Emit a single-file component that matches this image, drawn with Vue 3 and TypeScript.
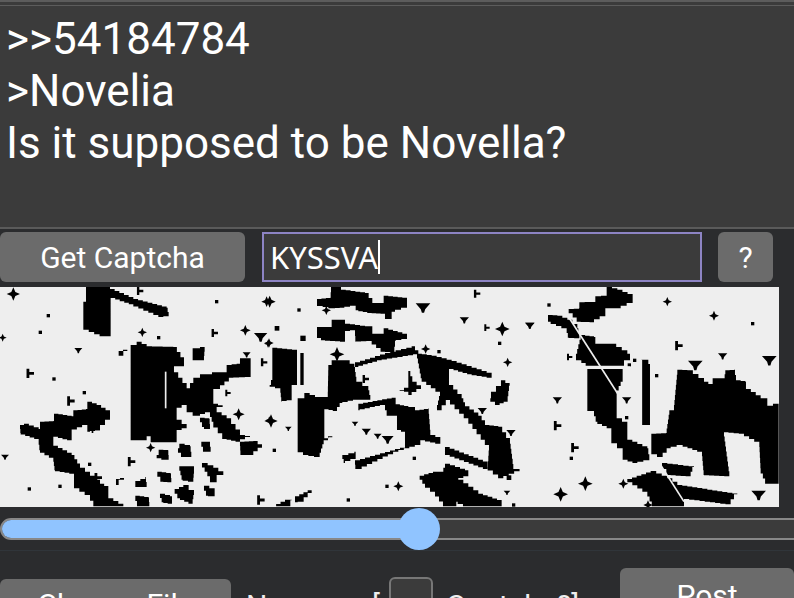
<script setup lang="ts">
// captcha shapes, in coordinates of 3x crops (left / middle / right part)
type Mark = [number, number, number, 'd' | 't' | 'f' | 'o']
type Part = { x: number; shapes: string[]; marks: Mark[]; lines?: string[] }

// the captcha is blocky, so slanted edges become stairs
function stairs(points: string, step = 15): string {
  const p = points.split(' ').map((s) => s.split(',').map(Number))
  const out: string[] = []
  p.forEach((a, i) => {
    const b = p[(i + 1) % p.length]
    const dx = b[0] - a[0]
    const dy = b[1] - a[1]
    const n = Math.max(1, Math.round(Math.max(Math.abs(dx), Math.abs(dy)) / step))
    let y = a[1]
    for (let k = 1; k <= n; k++) {
      const x = a[0] + (dx * k) / n
      out.push(`${x},${y}`)
      y = a[1] + (dy * k) / n
      out.push(`${x},${y}`)
    }
  })
  return out.join(' ')
}

function mark([x, y, r, kind]: Mark): string {
  const w = r * 0.3
  if (kind === 'd') {
    return `${x - r},${y} ${x - w},${y - w} ${x},${y - r} ${x + w},${y - w} ${x + r},${y} ${x + w},${y + w} ${x},${y + r} ${x - w},${y + w}`
  }
  if (kind === 't') {
    return `${x - r},${y - r * 0.5} ${x + r},${y - r * 0.5} ${x + w},${y + r * 0.3} ${x + w * 0.5},${y + r * 0.8} ${x - w * 0.5},${y + r * 0.8} ${x - w},${y + r * 0.3}`
  }
  if (kind === 'f') {
    return `${x - r * 0.6},${y - r} ${x},${y - r} ${x},${y - w} ${x + r},${y - w} ${x + r},${y + w} ${x},${y + w} ${x},${y + r} ${x - r * 0.6},${y + r}`
  }
  return `${x - r},${y - r} ${x + r},${y - r} ${x + r},${y + r} ${x - r},${y + r}`
}

const parts: Part[] = [
  {
    x: 0,
    shapes: [
      '258,6 330,6 330,12 400,42 500,68 506,94 490,96 400,58 332,34 332,154 315,154 250,128 250,50 258,46',
      '392,180 410,170 440,184 520,186 552,232 552,244 522,244 522,262 560,310 580,278 600,268 630,268 636,262 680,262 680,240 710,236 720,220 752,220 752,276 700,278 660,312 640,320 640,356 668,366 650,382 680,400 720,450 750,456 720,470 680,462 640,410 630,382 600,392 578,382 560,360 530,376 530,404 560,430 530,440 530,472 466,472 452,454 440,466 410,466 392,450',
      '60,420 72,416 116,432 120,410 160,408 162,386 215,394 220,376 258,372 262,350 290,360 330,384 330,404 300,436 270,440 262,420 215,440 215,466 160,452 160,482 215,510 240,548 300,596 325,610 325,640 370,664 290,664 270,630 222,600 222,566 165,556 160,518 120,496 116,462 62,444',
      '578,190 600,186 614,200 612,226 590,226 578,206',
      '720,470 760,468 786,488 760,510 722,510',
      '538,476 570,484 574,516 552,516 534,490',
      '476,494 504,496 506,524 484,520 470,510',
      '604,470 628,470 632,500 614,500',
      '538,544 566,544 582,566 580,590 548,584',
      '472,560 512,566 514,592 490,590',
      '606,534 640,548 670,570 650,592 630,574',
      '524,612 550,600 582,630 578,656 540,640',
      '480,626 510,634 516,656 490,652',
      '612,602 644,618 644,634 624,632',
      '406,632 446,638 448,664 416,664',
      '406,588 436,576 440,606 424,606',
      '348,582 372,576 372,584 356,600',
      '600,398 628,402 630,432 612,426',
      '356,198 382,190 382,198 370,212 356,212',
      '270,420 300,426 300,436 280,444',
    ],
    marks: [
      [40, 27, 20, 'd'], [145, 92, 5, 'o'], [121, 142, 5, 'o'], [8, 158, 12, 'd'], [427, 142, 14, 'd'], [476, 158, 5, 'o'],
      [650, 50, 5, 'o'], [800, 50, 16, 'd'], [736, 136, 16, 'd'], [782, 154, 20, 't'], [804, 176, 12, 'd'],
      [162, 282, 5, 'o'], [253, 323, 5, 'o'], [269, 538, 5, 'o'], [88, 612, 5, 'o'], [180, 604, 5, 'o'],
      [452, 488, 14, 'd'], [716, 388, 18, 'd'], [808, 406, 12, 'd'], [88, 265, 14, 'f'], [210, 348, 14, 'f'],
      [392, 530, 14, 'f'], [292, 578, 14, 'f'], [780, 645, 14, 'f'], [15, 515, 12, 't'], [235, 195, 12, 't'],
      [418, 18, 12, 'f'], [642, 144, 12, 'f'], [740, 208, 12, 't'], [790, 232, 12, 'f'], [682, 324, 10, 'f'],
    ],
    lines: ['497,260 497,370'],
  },
  {
    x: 265,
    shapes: [
      '198,6 228,6 228,14 300,24 322,54 352,54 356,32 426,40 426,68 390,80 380,102 360,86 320,84 280,76 272,62 238,68 210,70 190,66 156,60 156,42 196,38',
      '156,126 196,126 200,104 230,104 240,116 300,124 322,146 352,146 356,130 426,150 426,162 392,168 388,202 360,200 320,168 272,170 270,136 240,140 240,170 180,166 156,152',
      '22,188 96,196 96,300 80,320 80,346 50,350 46,310 14,300 22,270',
      '106,204 116,204 116,300 106,300',
      '190,240 200,226 240,226 268,246 274,290 310,316 316,344 280,344 232,354 216,378 178,370 178,460 202,454 176,478 164,516 130,510 98,494 98,340 118,324 150,336 188,336',
      '270,232 360,204 440,184 460,208 350,226 280,246',
      '456,206 500,212 560,228 680,268 680,278 620,268 552,248 552,300 590,340 600,364 640,392 660,420 700,425 735,476 745,552 780,552 715,580 668,545 672,480 610,400 555,345 530,376 516,360 525,320 470,280',
      '540,486 668,535 668,552 540,505',
      '280,356 380,338 392,358 430,366 450,376 490,370 496,450 526,462 526,476 480,466 466,480 400,500 290,552 272,552 270,526 420,484 420,440 396,430 396,392 370,392 360,360 284,376',
      '232,510 268,500 272,522 240,534',
      '464,572 504,560 530,560 540,536 600,556 610,574 580,584 640,626 710,650 710,664 610,664 578,650 574,664 546,664 510,620 480,596',
      '90,634 128,616 140,624 116,650 98,652',
      '20,664 60,644 80,646 76,664',
      '430,258 442,290 468,312 440,330 430,320 404,316 430,300',
      '678,320 708,286 734,302 728,350 704,360 676,340',
    ],
    marks: [
      [14, 50, 18, 'd'], [102, 75, 5, 'o'], [184, 76, 14, 'd'], [36, 130, 7, 'o'], [114, 160, 8, 'o'], [12, 174, 14, 'd'],
      [216, 208, 22, 'd'], [712, 132, 22, 'd'], [704, 175, 5, 'o'], [728, 232, 14, 'd'], [522, 200, 5, 'o'], [482, 192, 14, 'd'],
      [18, 408, 20, 'd'], [28, 496, 5, 'o'], [400, 604, 15, 'd'], [366, 604, 5, 'o'], [250, 645, 5, 'o'], [448, 520, 5, 'o'],
      [474, 66, 22, 't'], [598, 104, 14, 't'], [794, 120, 14, 't'], [738, 442, 14, 't'], [652, 376, 14, 't'], [634, 26, 12, 'f'],
      [664, 128, 10, 'f'], [300, 282, 12, 'f'], [270, 415, 10, 't'], [304, 438, 14, 't'], [368, 462, 18, 't'], [338, 452, 12, 't'],
      [70, 430, 10, 't'], [732, 578, 7, 'o'], [726, 622, 10, 't'], [746, 660, 5, 'o'],
    ],
  },
  {
    x: 524,
    shapes: [
      '248,6 280,14 326,34 326,54 290,70 244,70 244,94 210,112 170,110 134,72 165,70 166,52 214,50 214,34 248,30',
      '72,90 100,92 130,104 160,130 166,160 135,158 128,130 80,110',
      '170,150 210,156 214,176 260,176 310,206 318,226 300,242 198,242 172,226 156,206',
      '190,252 296,252 296,290 278,330 278,400 310,420 310,464 370,490 376,526 340,534 296,520 296,490 262,460 262,430 220,410 210,378 190,370',
      '352,224 368,224 378,250 378,420 352,420',
      '460,254 490,256 540,290 566,304 566,280 600,280 604,256 630,254 636,286 664,290 666,312 710,340 730,362 764,350 764,596 730,596 710,550 706,470 660,446 598,440 616,574 540,570 534,500 476,480 440,490 416,516 382,500 382,446 426,444 436,376 450,360',
      '414,534 510,546 500,574 440,570',
      '310,582 380,558 430,580 460,600 640,628 620,658 480,640 480,664 390,664 370,620',
    ],
    marks: [
      [430, 50, 14, 'd'], [570, 92, 15, 'd'], [686, 116, 5, 'o'], [75, 60, 5, 'o'], [18, 120, 14, 't'], [462, 182, 14, 'f'],
      [596, 212, 14, 't'], [736, 224, 22, 't'], [514, 238, 22, 't'], [398, 272, 5, 'o'], [100, 344, 14, 't'], [308, 344, 14, 't'],
      [308, 398, 5, 'o'], [98, 422, 14, 'f'], [150, 488, 14, 'f'], [142, 520, 5, 'o'], [184, 596, 22, 'd'], [110, 628, 22, 'd'],
      [298, 596, 15, 'd'], [704, 628, 22, 't'], [175, 210, 20, 'd'], [135, 216, 10, 'f'], [332, 226, 5, 'o'], [316, 240, 5, 'o'],
      [372, 660, 14, 'd'],
    ],
    lines: ['130,90 290,340', '195,246 320,246', '410,540 480,650', '352,224 352,470'],
  },
]
</script>

<template>
  <div class="page">
    <div class="top-lines"></div>
    <div class="post-text">
      <div>&gt;&gt;54184784</div>
      <div>&gt;Novelia</div>
      <div>Is it supposed to be Novella?</div>
    </div>

    <div class="captcha-row">
      <button class="btn get-captcha">Get Captcha</button>
      <div class="captcha-input">KYSSVA<span class="caret"></span></div>
      <button class="btn help">?</button>
    </div>

    <svg class="captcha-image" viewBox="0 0 779 220" width="779" height="220">
      <rect width="779" height="220" fill="#eeeeee" />
      <g class="ink">
        <g v-for="part in parts" :key="part.x" :transform="`translate(${part.x} -2) scale(0.3333)`">
          <polygon v-for="s in part.shapes" :key="s" :points="stairs(s)" fill="#000" />
          <polygon v-for="m in part.marks" :key="m.join()" :points="mark(m)" fill="#000" />
          <polyline v-for="l in part.lines" :key="l" :points="l" fill="none" stroke="#eeeeee" stroke-width="5" />
        </g>
      </g>
    </svg>

    <div class="slider">
      <div class="track">
        <div class="fill"></div>
      </div>
      <div class="thumb"></div>
    </div>

    <div class="bottom-row">
      <button class="btn choose">Choose File</button>
      <span class="label none">None</span>
      <span class="label">[</span>
      <span class="checkbox"></span>
      <span class="label">Captcha?]</span>
      <button class="btn post">Post</button>
    </div>
  </div>
</template>

<style scoped>
.page {
  width: 794px;
  height: 598px;
  overflow: hidden;
  background: #2b2c2e;
  font-family: Roboto, sans-serif;
  color: #fff;
}

.top-lines {
  height: 6px;
  background: #3b3b3b;
  border-top: 2px solid #5c5c5c;
  border-bottom: 1px solid #5c5c5c;
  box-sizing: border-box;
}

.post-text {
  height: 223px;
  box-sizing: border-box;
  padding: 7px 6px 0;
  background: #3b3b3b;
  border-bottom: 2px solid #5a5a5a;
  font-size: 44px;
  line-height: 52px;
}

.captcha-row {
  display: flex;
  align-items: flex-start;
  margin-top: 3px;
  height: 50px;
}

.btn {
  border: none;
  padding: 0;
  background: #6b6b6b;
  border-radius: 6px;
  color: #fff;
  font-family: Roboto, sans-serif;
  font-size: 30px;
}

.get-captcha {
  width: 245px;
  height: 50px;
}

.captcha-input {
  width: 440px;
  height: 50px;
  box-sizing: border-box;
  margin-left: 17px;
  padding-left: 6px;
  display: flex;
  align-items: center;
  background: #3b3b3b;
  border: 2px solid #8d84c4;
  font-family: "Noto Sans", sans-serif;
  font-size: 31px;
}

.caret {
  width: 2px;
  height: 34px;
  background: #fff;
}

.help {
  width: 55px;
  height: 50px;
  margin-left: 16px;
}

.captcha-image {
  display: block;
  margin-top: 5px;
}

.ink {
  filter: blur(0.5px);
}

.slider {
  position: relative;
  height: 43px;
  border-bottom: 1px solid #30353a;
}

.track {
  position: absolute;
  left: 0;
  right: -20px;
  top: 11px;
  height: 22px;
  box-sizing: border-box;
  background: #3b3b3b;
  border: 2px solid #888;
  border-radius: 11px;
  overflow: hidden;
}

.fill {
  width: 418px;
  height: 100%;
  background: #90c4ff;
}

.thumb {
  position: absolute;
  left: 398px;
  top: 1px;
  width: 42px;
  height: 42px;
  border-radius: 50%;
  background: #90c4ff;
}

.bottom-row {
  display: flex;
  align-items: flex-start;
  margin-top: 17px;
  height: 30px;
  font-size: 30px;
}

.choose {
  flex: none;
  width: 231px;
  height: 50px;
  margin-top: 11px;
}

.label {
  margin-top: 20px;
  white-space: nowrap;
  color: #eee;
}

.none {
  width: 126px;
  margin-left: 15px;
}

.checkbox {
  flex: none;
  width: 44px;
  height: 44px;
  box-sizing: border-box;
  margin: 9px 13px 0 9px;
  background: #3b3b3b;
  border: 2px solid #777;
  border-radius: 6px;
}

.post {
  flex: none;
  width: 174px;
  height: 54px;
  margin-left: auto;
}
</style>
